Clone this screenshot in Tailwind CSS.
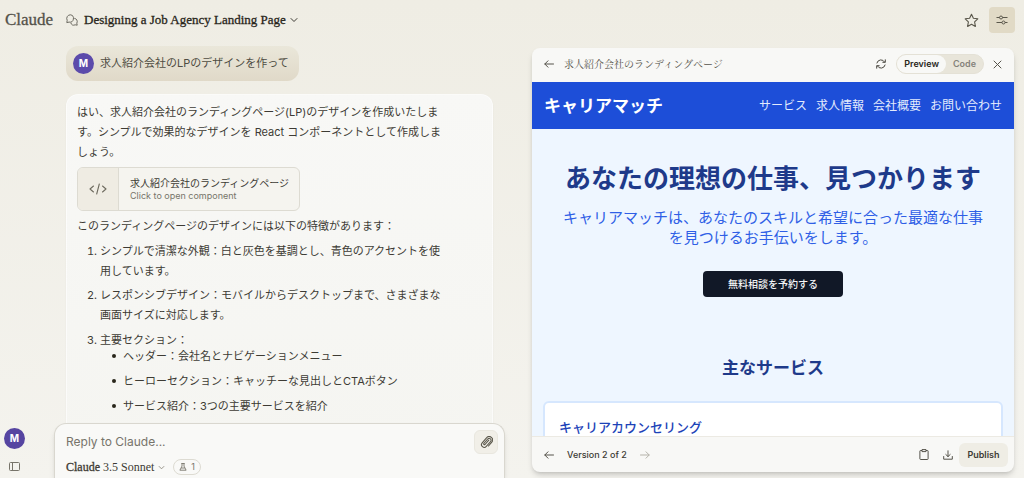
<!DOCTYPE html>
<html lang="ja">
<head>
<meta charset="utf-8">
<meta name="viewport" content="width=device-width, initial-scale=1">
<title>Designing a Job Agency Landing Page - Claude</title>
<script src="https://cdn.jsdelivr.net/npm/@tailwindcss/browser@4"></script>
</head>
<body class="flex h-screen flex-col overflow-hidden bg-linear-to-b from-[#efede4] to-[#f4f3ee] font-['Inter','Noto_Sans_CJK_JP',sans-serif] text-[#3d3b34]">

<header class="flex h-10 shrink-0 items-center pr-[9px] pl-[5px]">
  <a href="#" class="w-[61px] font-['Liberation_Serif',serif] text-[17px] text-[#54524a] [-webkit-text-stroke:0.3px]">Claude</a>
  <button class="flex items-center gap-1 font-['Liberation_Serif',serif] text-[13px] text-[#29261b]">
    <svg class="mr-[2px] size-3" viewBox="0 0 12 12" fill="none" stroke="#6b6960" stroke-width="1" stroke-linejoin="round"><path d="M4.400.8a3.700 3.700 0 0 0-3.200 5.500L.8 8.600l2.300-.5A3.700 3.700 0 1 0 4.400.8Z"/><path d="M8.300 4.300a3.300 3.300 0 0 1 2.500 4.900l.4 2-2-.4a3.300 3.300 0 0 1-4.400-1.900"/></svg>
    <span class="[-webkit-text-stroke:0.3px]">Designing a Job Agency Landing Page</span>
    <svg class="size-2" viewBox="0 0 8 8" fill="none" stroke="#3d3b34" stroke-width="1" stroke-linecap="round"><path d="M1 2.500 4 5.500 7 2.500"/></svg>
  </button>
  <div class="ml-auto flex items-center gap-[10px]">
    <button aria-label="Star"><svg class="size-[15px]" viewBox="0 0 15 15" fill="none" stroke="#5a574b" stroke-width="1.100" stroke-linejoin="round"><path d="m7.500 1.200 1.900 4 4.400.6-3.200 3.100.8 4.500-3.900-2.200-3.900 2.200.8-4.500L1.200 5.800l4.400-.6Z"/></svg></button>
    <button aria-label="Settings" class="flex size-[26px] items-center justify-center rounded bg-[#e1dac6]"><svg class="size-3" viewBox="0 0 12 12" fill="none" stroke="#5a574b" stroke-width="1"><path d="M.5 3.500h3M6.500 3.500h5M.5 8.500h5.500M9 8.500h2.500"/><circle cx="5" cy="3.500" r="1.500"/><circle cx="7.500" cy="8.500" r="1.500"/></svg></button>
  </div>
</header>

<div class="flex min-h-0 flex-1 pr-[10px]">
  <nav class="flex w-[54px] shrink-0 flex-col items-start justify-end gap-3 pb-[6px] pl-1">
    <button class="flex size-[21px] items-center justify-center rounded-full bg-[#5645a1] text-[10px] font-bold text-white">M</button>
    <button aria-label="Open sidebar" class="pl-[5px]"><svg class="h-[11px] w-[11px]" viewBox="0 0 11 11" fill="none" stroke="#77746a" stroke-width="1"><rect x=".5" y="1.500" width="10" height="8" rx="1"/><path d="M3.500 1.500v8"/></svg></button>
  </nav>

  <main class="flex min-w-0 flex-[451] flex-col">
    <div class="min-h-0 flex-1 overflow-hidden px-3 pt-[6px]">
      <div class="flex w-fit items-center gap-[6px] rounded-xl bg-linear-to-b from-[#eae7da] to-[#e0d9c8] py-[7px] pr-[10px] pl-[7px] text-[11px] text-[#4f4d43]">
        <span class="flex size-[21px] items-center justify-center rounded-full bg-[#5c4bab] text-[10px] font-bold text-white">M</span>
        <p>求人紹介会社のLPのデザインを作って</p>
      </div>

      <article class="mt-[13px] h-[360px] rounded-xl border border-white/60 bg-linear-to-b from-[#f8f8f6] to-[#f5f5f1] px-[10px] pt-[7px] text-[11px] leading-5 shadow-xs shadow-black/5">
        <p>はい、求人紹介会社のランディングページ(LP)のデザインを作成いたしま<br>す。シンプルで効果的なデザインを React コンポーネントとして作成しま<br>しょう。</p>
        <button class="mt-[5px] flex h-11 w-[223px] items-stretch overflow-hidden rounded-md border border-[#dddbd2] bg-[#f5f4ef] text-left">
          <span class="flex w-[41px] items-center justify-center border-r border-[#dddbd2] bg-[#efece3]"><svg class="h-3 w-[18px]" viewBox="0 0 18 12" fill="none" stroke="#6f6c60" stroke-width="1.100" stroke-linecap="round" stroke-linejoin="round"><path d="M4.500 3 1 6l3.500 3M13.500 3 17 6l-3.500 3M10.300 1 7.700 11"/></svg></span>
          <span class="flex flex-col justify-center pl-[11px]"><span class="text-[10px] leading-[14px]">求人紹介会社のランディングページ</span><span class="text-[9px] leading-3 text-[#77746a]">Click to open component</span></span>
        </button>
        <p class="mt-[5px]">このランディングページのデザインには以下の特徴があります：</p>
        <ol class="mt-[5px] list-decimal pl-[23px]">
          <li>シンプルで清潔な外観：白と灰色を基調とし、青色のアクセントを使<br>用しています。</li>
          <li class="mt-1">レスポンシブデザイン：モバイルからデスクトップまで、さまざまな<br>画面サイズに対応します。</li>
          <li class="mt-[5px]">主要セクション：
            <ul class="-mt-1 flex flex-col gap-[5px] pl-3">
              <li class="flex items-center gap-[7px] before:size-1 before:rounded-full before:bg-[#29261b]">ヘッダー：会社名とナビゲーションメニュー</li>
              <li class="flex items-center gap-[7px] before:size-1 before:rounded-full before:bg-[#29261b]">ヒーローセクション：キャッチーな見出しとCTAボタン</li>
              <li class="flex items-center gap-[7px] before:size-1 before:rounded-full before:bg-[#29261b]">サービス紹介：3つの主要サービスを紹介</li>
            </ul>
          </li>
        </ol>
      </article>
    </div>

    <form class="relative z-10 -mt-2 h-[55px] shrink-0 rounded-t-xl border border-b-0 border-[#d9d7cf] bg-[#f9f9f7] pt-[6px] pr-[6px] pl-[11px] shadow-md shadow-black/10">
      <div class="flex items-center">
        <input aria-label="Reply to Claude" placeholder="Reply to Claude..." class="min-w-0 flex-1 bg-transparent text-[12px] outline-none placeholder:text-[#77746a]">
        <button type="button" aria-label="Attach file" class="flex size-6 items-center justify-center rounded-md border border-[#e9e7df] bg-[#f1efe8]"><svg class="size-[13px]" viewBox="0 0 13 13" fill="none" stroke="#5a574b" stroke-width="1.100" stroke-linecap="round" stroke-linejoin="round"><path d="M8.800 4.200 5 8.500a.8.800 0 0 1-1.200-1L7.700 3a1.900 1.900 0 0 1 2.900 2.500L6.300 10.400a2.700 2.700 0 0 1-4.100-3.600L6.500 1.900a3.400 3.400 0 0 1 5.300 4.300L8.500 10"/></svg></button>
      </div>
      <div class="mt-[5px] flex items-center gap-2">
        <button type="button" class="flex items-center gap-1 font-['Liberation_Serif',serif] text-[12px] leading-4 text-[#3d3b34]"><span><b class="font-normal [-webkit-text-stroke:0.3px]">Claude</b> 3.5 Sonnet</span><svg class="size-[7px]" viewBox="0 0 8 8" fill="none" stroke="#8b887d" stroke-width="1"><path d="M1 2.500 4 5.500 7 2.500"/></svg></button>
        <button type="button" class="flex h-4 items-center gap-1 rounded-full border border-[#dddbd2] px-[5px] text-[9px] text-[#77746a]"><svg class="size-2" viewBox="0 0 8 8" fill="none" stroke="#77746a" stroke-width=".9" stroke-linejoin="round"><path d="M2.300.5h3.400M3 .5v2.600L.9 7.200h6.200L5 3.100V.5M2.200 5h3.600"/></svg>1</button>
      </div>
    </form>
  </main>

  <section class="mt-2 mb-[6px] ml-[27px] flex min-w-0 flex-[482] flex-col overflow-hidden rounded-lg bg-[#f8f8f6] shadow-md shadow-black/15">
    <div class="flex h-[34px] shrink-0 items-center pr-3 pb-[2px] pl-3">
      <button aria-label="Back"><svg class="size-[10px]" viewBox="0 0 10 10" fill="none" stroke="#55534a" stroke-width="1" stroke-linecap="round" stroke-linejoin="round"><path d="M9.500 5H.8M4 1.800.8 5 4 8.200"/></svg></button>
      <h2 class="ml-[10px] font-['Liberation_Serif','Noto_Serif_CJK_JP','Noto_Sans_CJK_JP',serif] text-[10px] text-[#55534a]">求人紹介会社のランディングページ</h2>
      <button aria-label="Refresh" class="ml-auto"><svg class="size-[10px]" viewBox="0 0 10 10" fill="none" stroke="#4a4840" stroke-width="1" stroke-linecap="round" stroke-linejoin="round"><path d="M.9 4A4.200 4.200 0 0 1 8.600 3M9.100 6A4.200 4.200 0 0 1 1.400 7M9.300.8v2.500H6.800M.7 9.200V6.700h2.500"/></svg></button>
      <div class="ml-[10px] flex h-5 items-stretch rounded-full border border-[#e4e1d6] bg-[#e8e5da] text-[9px] font-semibold">
        <button class="rounded-full bg-[#f8f8f6] px-[7px] text-[#29261b]">Preview</button>
        <button class="px-[7px] text-[#85827a]">Code</button>
      </div>
      <button aria-label="Close" class="ml-[9px]"><svg class="size-[9px]" viewBox="0 0 9 9" fill="none" stroke="#55534a" stroke-width="1" stroke-linecap="round"><path d="m1 1 7 7M8 1 1 8"/></svg></button>
    </div>

    <div class="min-h-0 flex-1 overflow-hidden bg-[#eef6ff] font-['Noto_Sans_CJK_JP',sans-serif]">
      <div class="flex h-[47px] items-center justify-between bg-[#1d4ed8] px-3 pb-[2px] text-white">
        <h1 class="text-[17px] font-bold">キャリアマッチ</h1>
        <nav class="flex gap-[9px] text-[12px] text-[#e3ebfd]"><a href="#">サービス</a><a href="#">求人情報</a><a href="#">会社概要</a><a href="#">お問い合わせ</a></nav>
      </div>
      <div class="flex flex-col items-center px-[11px] pt-[30px] text-center">
        <h2 class="text-[26px] leading-9 font-bold text-[#1e3a8a]">あなたの理想の仕事、見つかります</h2>
        <p class="mt-3 text-[15px] leading-5 text-[#2f5fe6]">キャリアマッチは、あなたのスキルと希望に合った最適な仕事<br>を見つけるお手伝いをします。</p>
        <button class="mt-6 h-[26px] w-[140px] rounded bg-[#111827] pb-px text-[10px] font-medium text-[#f3f4f6]">無料相談を予約する</button>
        <h3 class="mt-[58px] text-[17px] leading-6 font-bold text-[#1e3a8a]">主なサービス</h3>
        <div class="mt-[22px] h-40 w-full rounded-md border-2 border-[#d6e7fe] bg-white px-[14px] pt-[14px] text-left"><h4 class="text-[13px] leading-5 font-medium text-[#1d43b8]">キャリアカウンセリング</h4></div>
      </div>
    </div>

    <div class="flex h-9 shrink-0 items-center border-t border-[#eceae3] pr-[6px] pl-3 text-[9px]">
      <button aria-label="Previous version"><svg class="size-[10px]" viewBox="0 0 10 10" fill="none" stroke="#55534a" stroke-width="1" stroke-linecap="round" stroke-linejoin="round"><path d="M9.500 5H.8M4 1.800.8 5 4 8.200"/></svg></button>
      <span class="mx-[13px] font-medium">Version 2 of 2</span>
      <button aria-label="Next version"><svg class="size-[10px]" viewBox="0 0 10 10" fill="none" stroke="#b5b3aa" stroke-width="1" stroke-linecap="round" stroke-linejoin="round"><path d="M.5 5h8.700M6 1.800 9.200 5 6 8.200"/></svg></button>
      <button aria-label="Copy" class="ml-auto"><svg class="h-[11px] w-[10px]" viewBox="0 0 10 11" fill="none" stroke="#55534a" stroke-width="1" stroke-linejoin="round"><path d="M3 1.500H1.500a.6.600 0 0 0-.6.600v7.800c0 .3.300.600.6.600h7c.3 0 .6-.3.600-.6V2.100a.6.600 0 0 0-.6-.6H7"/><path d="M3 .6h4v2H3Z"/></svg></button>
      <button aria-label="Download" class="ml-[14px]"><svg class="size-[10px]" viewBox="0 0 10 10" fill="none" stroke="#55534a" stroke-width="1" stroke-linecap="round" stroke-linejoin="round"><path d="M5 .8v5.700M2.800 4.500 5 6.600l2.200-2.100M.7 6.500v2.700h8.600V6.500"/></svg></button>
      <button class="ml-[6px] h-6 w-[49px] rounded-md bg-[#efede5] font-semibold text-[#3d3b34]">Publish</button>
    </div>
  </section>
</div>
</body>
</html>
